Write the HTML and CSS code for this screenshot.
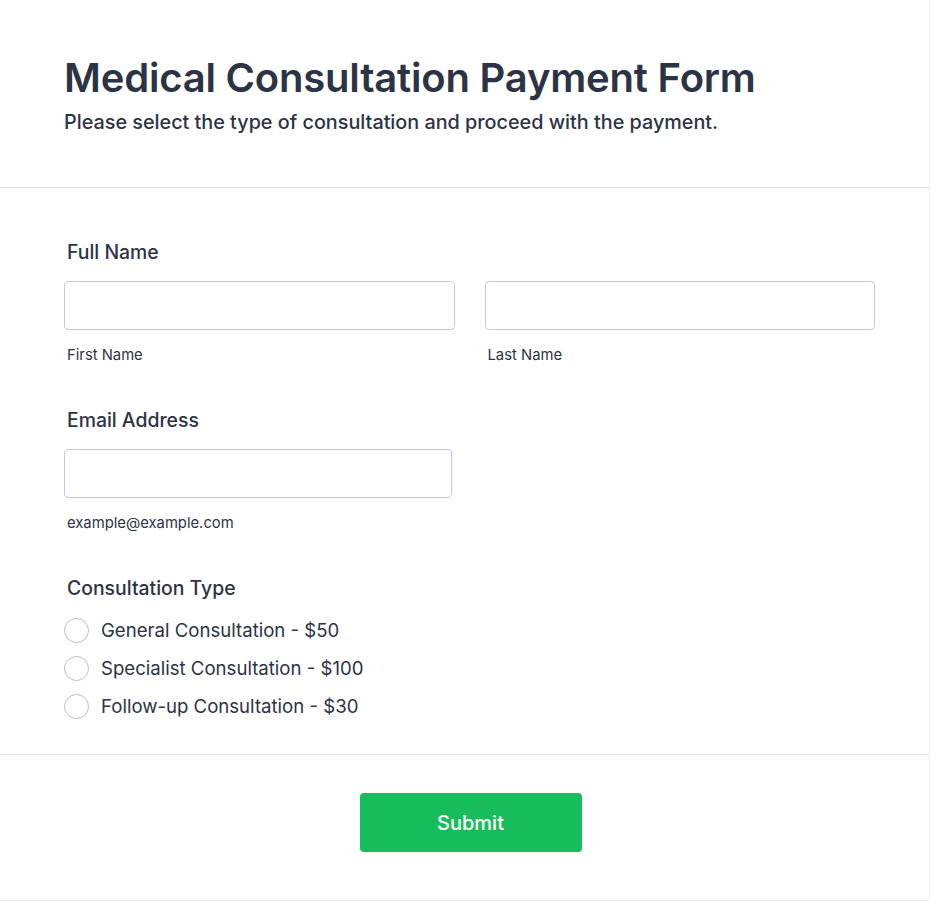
FILE: index.html
```html
<!DOCTYPE html>
<html lang="en">
<head>
    <meta charset="UTF-8">
    <meta name="viewport" content="width=device-width, initial-scale=1.0">
    <title>Medical Consultation Payment Form</title>
    <link rel="stylesheet" href="styles.css">
</head>
<body>

<div class="form-card">
    <div class="form-header">
        <h1>Medical Consultation Payment Form</h1>
        <p class="subtitle">Please select the type of consultation and proceed with the payment.</p>
    </div>

    <form class="form-body">
        <div class="field">
            <label class="field-label">Full Name</label>
            <div class="name-row">
                <div class="name-col">
                    <input type="text" id="first">
                    <label for="first" class="sub-label">First Name</label>
                </div>
                <div class="name-col">
                    <input type="text" id="last">
                    <label for="last" class="sub-label">Last Name</label>
                </div>
            </div>
        </div>

        <div class="field">
            <label for="email" class="field-label">Email Address</label>
            <input type="email" id="email" class="email-input">
            <span class="sub-label">example@example.com</span>
        </div>

        <div class="field">
            <span class="field-label">Consultation Type</span>
            <div class="radio-list">
                <label class="radio-item"><input type="radio" name="type"> General Consultation - $50</label>
                <label class="radio-item"><input type="radio" name="type"> Specialist Consultation - $100</label>
                <label class="radio-item"><input type="radio" name="type"> Follow-up Consultation - $30</label>
            </div>
        </div>
    </form>

    <div class="form-footer">
        <button type="button" class="submit-btn">Submit</button>
    </div>
</div>

</body>
</html>
```

FILE: styles.css
```css
body {
    margin: 0;
    padding: 0;
    font-family: Inter, "Noto Sans", sans-serif;
    color: #2c3345;
    background-color: #ffffff;
}

.form-card {
    width: 929px;
    height: 900px;
    border-right: 1px solid #ececf1;
    border-bottom: 1px solid #ececf1;
    background-color: #ffffff;
}

.form-header {
    padding: 54px 64px 0 64px;
    height: 133px;
    border-bottom: 1px solid #dcdce6;
}

h1 {
    margin: 0;
    font-size: 40px;
    font-weight: 600;
    line-height: 48px;
    letter-spacing: -0.2px;
}

.subtitle {
    margin: 8px 0 0 0;
    font-size: 19.8px;
    font-weight: 500;
    line-height: 24px;
}

.form-body {
    padding: 52px 54px 0 64px;
    height: 514px;
    border-bottom: 1px solid #e6e6ec;
}

.field {
    margin-bottom: 44px;
}

.field-label {
    display: block;
    padding-left: 3px;
    font-size: 19.4px;
    font-weight: 500;
    line-height: 24px;
    margin-bottom: 17px;
}

.name-row {
    display: flex;
    gap: 30px;
}

.name-col {
    flex: 1;
}

input[type="text"],
input[type="email"] {
    display: block;
    box-sizing: border-box;
    width: 100%;
    height: 49px;
    margin: 0;
    border: 1px solid #c3cad8;
    border-radius: 4px;
    background: #ffffff;
    font-family: inherit;
    font-size: 16px;
}

.email-input {
    width: 388px !important;
}

.sub-label {
    display: block;
    padding-left: 3px;
    margin-top: 16px;
    font-size: 14.8px;
    line-height: 18px;
}

.radio-list {
    display: flex;
    flex-direction: column;
    gap: 12px;
    margin-top: 0;
}

.radio-item {
    display: flex;
    align-items: center;
    gap: 12px;
    font-size: 18.6px;
    line-height: 26px;
}

.radio-item input {
    appearance: none;
    margin: 0;
    width: 25px;
    height: 25px;
    border: 1px solid #b8bdc9;
    border-radius: 50%;
    background: #ffffff;
}

.form-footer {
    display: flex;
    justify-content: center;
    padding: 38px 0 0 12px;
}

.submit-btn {
    width: 222px;
    height: 59px;
    border: none;
    border-radius: 4px;
    background-color: #18bd5b;
    color: #ffffff;
    font-family: inherit;
    font-size: 20px;
    font-weight: 500;
    cursor: pointer;
}

.submit-btn:hover {
    background-color: #16a94f;
}
```
